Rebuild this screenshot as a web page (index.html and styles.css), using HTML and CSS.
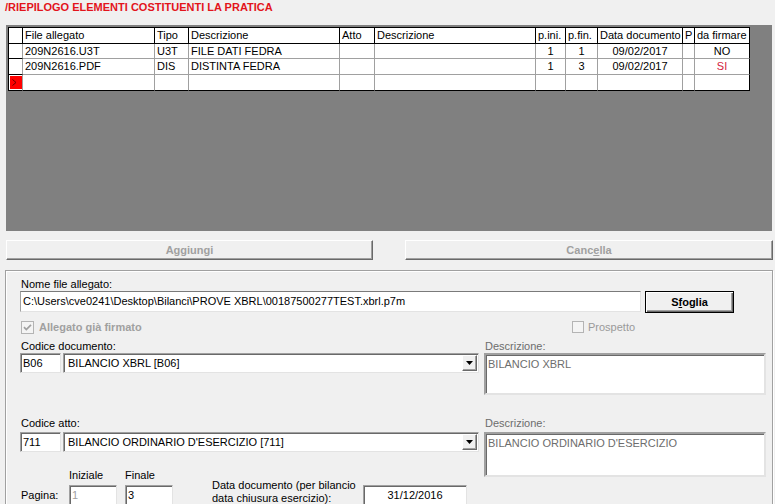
FILE: index.html
```html
<!DOCTYPE html>
<html>
<head>
<meta charset="utf-8">
<title>Riepilogo</title>
<link rel="stylesheet" href="styles.css">
</head>
<body>
<div class="title">/RIEPILOGO ELEMENTI COSTITUENTI LA PRATICA</div>
<div class="grid-wrap">
  <div class="dgrid">
    <div class="c h sel"></div><div class="c h">File allegato</div><div class="c h">Tipo</div><div class="c h">Descrizione</div><div class="c h">Atto</div><div class="c h">Descrizione</div><div class="c h">p.ini.</div><div class="c h">p.fin.</div><div class="c h">Data documento</div><div class="c h">P</div><div class="c h lastcol">da firmare</div>

    <div class="c sel selrow"></div><div class="c">209N2616.U3T</div><div class="c">U3T</div><div class="c">FILE DATI FEDRA</div><div class="c"></div><div class="c"></div><div class="c ctr">1</div><div class="c ctr">1</div><div class="c ctr">09/02/2017</div><div class="c"></div><div class="c ctr lastcol">NO</div>

    <div class="c sel selrow"></div><div class="c">209N2616.PDF</div><div class="c">DIS</div><div class="c">DISTINTA FEDRA</div><div class="c"></div><div class="c"></div><div class="c ctr">1</div><div class="c ctr">3</div><div class="c ctr">09/02/2017</div><div class="c"></div><div class="c ctr lastcol red">SI</div>

    <div class="c sel lastrow"><span class="newrow"><svg width="5" height="7" viewBox="0 0 5 7"><path d="M0.5 0.5 L4 3.5 L0.5 6.5" fill="none" stroke="#6a0000" stroke-width="1"/></svg></span></div><div class="c lastrow"></div><div class="c lastrow"></div><div class="c lastrow"></div><div class="c lastrow"></div><div class="c lastrow"></div><div class="c lastrow"></div><div class="c lastrow"></div><div class="c lastrow"></div><div class="c lastrow"></div><div class="c lastrow lastcol"></div>
  </div>
</div>

<div class="btns">
  <div class="btn b-add">Aggiungi</div>
  <div class="btn b-del">Canc<u>e</u>lla</div>
</div>

<div class="panel">
  <div class="lbl">Nome file allegato:</div>
  <div class="frow">
    <div class="inp path">C:\Users\cve0241\Desktop\Bilanci\PROVE XBRL\00187500277TEST.xbrl.p7m</div>
    <div class="sfoglia">S<u>f</u>oglia</div>
  </div>

  <div class="chkrow">
    <div class="chk-left">
      <svg class="cb" width="13" height="13" viewBox="0 0 13 13"><rect x="0.5" y="0.5" width="12" height="12" fill="#f4f4f4" stroke="#b4b4b4"/><path d="M3 6.2 L5.3 8.6 L10 3.8" fill="none" stroke="#a0a0a0" stroke-width="1.7"/></svg>
      <span class="dis-bold">Allegato già firmato</span>
    </div>
    <div class="chk-right">
      <svg class="cb" width="12" height="12" viewBox="0 0 12 12"><rect x="0.5" y="0.5" width="11" height="11" fill="#f4f4f4" stroke="#b4b4b4"/></svg>
      <span class="dis">Prospetto</span>
    </div>
  </div>

  <div class="cols">
    <div class="lc">
      <div class="lbl">Codice documento:</div>
      <div class="crow">
        <div class="inp code">B06</div>
        <div class="inp combo"><span class="ctext">BILANCIO XBRL [B06]</span><span class="arrow"><svg width="7" height="4" viewBox="0 0 7 4"><polygon points="0,0 7,0 3.5,4" fill="#000"/></svg></span></div>
      </div>
      <div class="lbl lbl2">Codice atto:</div>
      <div class="crow crow-last">
        <div class="inp code">711</div>
        <div class="inp combo"><span class="ctext">BILANCIO ORDINARIO D'ESERCIZIO [711]</span><span class="arrow"><svg width="7" height="4" viewBox="0 0 7 4"><polygon points="0,0 7,0 3.5,4" fill="#000"/></svg></span></div>
      </div>
      <div class="prow">
        <div class="pg-lbl">Pagina:</div>
        <div class="pcol">
          <div class="plbl">Iniziale</div>
          <div class="inp pinp grey">1</div>
        </div>
        <div class="pcol pcol2">
          <div class="plbl">Finale</div>
          <div class="inp pinp">3</div>
        </div>
        <div class="dlbl">Data documento (per bilancio<br>data chiusura esercizio):</div>
        <div class="inp date">31/12/2016</div>
      </div>
    </div>
    <div class="rc">
      <div class="lbl glbl">Descrizione:</div>
      <div class="tarea ta1">BILANCIO XBRL</div>
      <div class="lbl lbl2 glbl">Descrizione:</div>
      <div class="tarea ta2">BILANCIO ORDINARIO D'ESERCIZIO</div>
    </div>
  </div>
</div>
</body>
</html>
```

FILE: styles.css
```css
* { box-sizing: border-box; }
html, body { margin: 0; padding: 0; }
body {
  width: 775px;
  height: 504px;
  overflow: hidden;
  background: #f0f0f0;
  font-family: "Liberation Sans", Arial, sans-serif;
  font-size: 11px;
  color: #000;
}
u { text-decoration: underline; text-underline-offset: 1px; }

.title {
  height: 25px;
  padding: 1px 0 0 5px;
  font-weight: bold;
  color: #e3141b;
  line-height: 13px;
}

.grid-wrap {
  margin-left: 6px;
  width: 766px;
  height: 206px;
  background: #808080;
  padding: 2px 0 0 2px;
}
.dgrid {
  display: grid;
  width: 742px;
  grid-template-columns: 14px 132px 34px 151px 35px 161px 30px 32px 85px 12px 55px;
  grid-template-rows: 16px 15px 16px 16px;
  border-left: 1px solid #000;
  border-top: 1px solid #000;
  background: #fff;
}
.c {
  border-right: 1px solid #a0a0a0;
  border-bottom: 1px solid #a0a0a0;
  padding: 0 2px;
  display: flex;
  align-items: center;
  white-space: nowrap;
  overflow: hidden;
  line-height: 13px;
}
.c.h { border-right-color: #000; border-bottom-color: #000; }
.c.ctr { justify-content: center; }
.c.lastcol { border-right-color: #000; }
.c.lastrow { border-bottom-color: #000; }
.c.sel { padding: 0; }
.c.selrow { border-bottom-color: #000; }
.c.red { color: #d4213d; }
.newrow {
  display: flex;
  align-items: center;
  width: 12px;
  height: 13px;
  margin: 0 0 1px 1px;
  background: #ff0000;
  padding-left: 2px;
}
.newrow svg { display: block; }

.btns {
  display: flex;
  margin-top: 9px;
  height: 20px;
}
.btn {
  height: 20px;
  background: #f0f0f0;
  border: 1px solid;
  border-color: #fff #696969 #696969 #fff;
  box-shadow: inset -1px -1px 0 #a0a0a0;
  font-weight: bold;
  color: #a0a0a0;
  display: flex;
  align-items: center;
  justify-content: center;
}
.b-add { margin-left: 6px; width: 367px; }
.b-del { margin-left: 32px; width: 368px; }

.panel {
  margin: 10px 0 0 5px;
  width: 768px;
  height: 250px;
  border: 1px solid #a0a0a0;
  box-shadow: inset 1px 1px 0 #fff, 1px 1px 0 #fff;
  padding: 7px 0 0 14px;
}
.lbl {
  height: 13px;
  line-height: 13px;
  padding-left: 1px;
  white-space: nowrap;
}
.lbl2 { height: 15px; }
.glbl { color: #6d6d6d; }

.inp {
  background: #fff;
  border: 1px solid;
  border-color: #a0a0a0 #e3e3e3 #e3e3e3 #a0a0a0;
  box-shadow: inset 1px 1px 0 #696969;
  white-space: nowrap;
  overflow: hidden;
}

.frow { display: flex; height: 22px; }
.path {
  width: 621px;
  height: 21px;
  line-height: 19px;
  padding-left: 2px;
  border-color: #7a7a7a #e3e3e3 #e3e3e3 #a0a0a0;
  box-shadow: none;
}
.sfoglia {
  margin-left: 4px;
  width: 89px;
  height: 22px;
  border: 1px solid #000;
  box-shadow: inset 1px 1px 0 #fff, inset -1px -1px 0 #696969, inset -2px -2px 0 #a0a0a0;
  background: #f0f0f0;
  font-weight: bold;
  display: flex;
  align-items: center;
  justify-content: center;
}

.chkrow {
  display: flex;
  margin-top: 6px;
  height: 16px;
  align-items: center;
}
.chk-left {
  width: 552px;
  display: flex;
  align-items: center;
  padding-left: 1px;
}
.chk-right { display: flex; align-items: center; }
.cb { display: block; flex: none; }
.dis-bold { margin-left: 5px; font-weight: bold; color: #a0a0a0; }
.dis { margin-left: 4px; color: #9a9a9a; }

.cols { display: flex; margin-top: 5px; }
.lc { width: 459px; }
.rc { width: 282px; margin-left: 5px; }

.crow { display: flex; height: 20px; margin-bottom: 44px; }
.crow-last { margin-bottom: 0; }
.code {
  width: 41px;
  height: 20px;
  line-height: 18px;
  padding-left: 2px;
}
.combo {
  margin-left: 2px;
  width: 416px;
  height: 20px;
  display: flex;
  align-items: flex-start;
}
.ctext { line-height: 18px; padding-left: 4px; flex: 1; }
.arrow {
  flex: none;
  width: 15px;
  height: 16px;
  margin: 1px 1px 0 0;
  background: #f0f0f0;
  border: 1px solid;
  border-color: #fff #696969 #696969 #fff;
  box-shadow: inset -1px -1px 0 #a0a0a0;
  display: flex;
  align-items: center;
  justify-content: center;
}
.arrow svg { display: block; }

.prow {
  display: flex;
  align-items: flex-end;
  margin-top: 17px;
  height: 36px;
}
.pg-lbl {
  width: 49px;
  height: 20px;
  line-height: 20px;
  padding-left: 1px;
}
.pcol { width: 48px; display: flex; flex-direction: column; }
.pcol2 { margin-left: 8px; }
.plbl { height: 16px; line-height: 13px; }
.pinp {
  width: 48px;
  height: 20px;
  line-height: 18px;
  padding-left: 2px;
}
.grey { color: #a0a0a0; }
.dlbl {
  margin-left: 39px;
  width: 151px;
  line-height: 13px;
  height: 26px;
  white-space: nowrap;
}
.date {
  width: 104px;
  height: 20px;
  line-height: 18px;
  text-align: center;
}

.tarea {
  width: 282px;
  background: #fff;
  border: 2px solid;
  border-color: #a0a0a0 #e3e3e3 #e3e3e3 #a0a0a0;
  box-shadow: inset 1px 1px 0 #696969;
  color: #6d6d6d;
  padding: 3px 0 0 2px;
  line-height: 13px;
}
.ta1 { height: 42px; margin-bottom: 22px; }
.ta2 { height: 45px; }
```
